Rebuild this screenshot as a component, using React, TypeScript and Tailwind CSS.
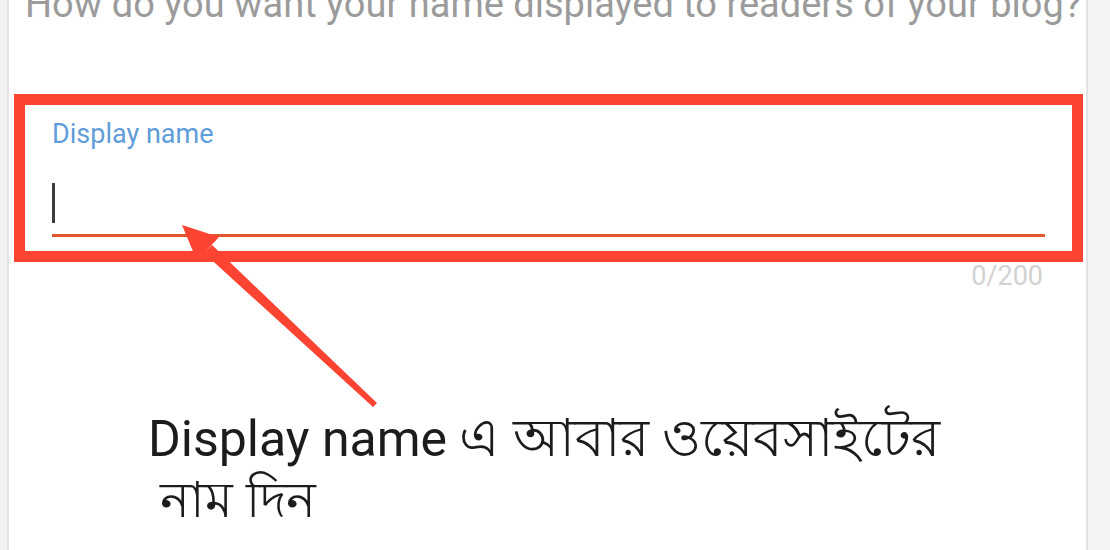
export default function App() {
  return (
    <div className="relative w-[1110px] h-[550px] overflow-hidden bg-[#f3f3f3] flex font-['Roboto','Noto_Sans',sans-serif]">
      {/* Card */}
      <div className="ml-[7px] w-[1081px] h-full bg-white border-l-[2px] border-r-[2px] border-[#e3e3e3] flex flex-col">
        <p className="-mt-[16px] ml-[16px] text-[38px] leading-[40px] text-[#9b9b9b] whitespace-nowrap">
          How do you want your name displayed to readers of your blog?
        </p>

        {/* Highlighted field */}
        <div className="mt-[70px] ml-[5px] w-[1069px] border-[11px] border-[#fd4433] px-[27px] pt-[13px] pb-[14px]">
          <div className="text-[27px] leading-[32px] text-[#5f9cda]">Display name</div>
          <div className="mt-[33px] w-[3px] h-[40px] bg-[#3c3c3c]" />
          <div className="mt-[11px] h-[3px] bg-[#e2572d]" />
        </div>
        <div className="self-end mr-[43px] text-[27px] leading-[28px] text-[#d2d2d2]">0/200</div>

        {/* Caption */}
        <p className="mt-[118px] ml-[139px] text-[50px] leading-[61px] text-[#1c1c1c]">
          Display name <span className="text-[53px]">এ আবার ওয়েবসাইটের</span>
          <br />
          &nbsp;নাম দিন
        </p>
      </div>

      {/* Arrow overlay */}
      <svg className="absolute left-0 top-0" width="1110" height="550" viewBox="0 0 1110 550">
        <polygon points="182,225 219,237 197,261" fill="#fd4433" />
        <polygon points="204,253 212,245 377,403 373,407" fill="#fd4433" />
      </svg>
    </div>
  );
}
